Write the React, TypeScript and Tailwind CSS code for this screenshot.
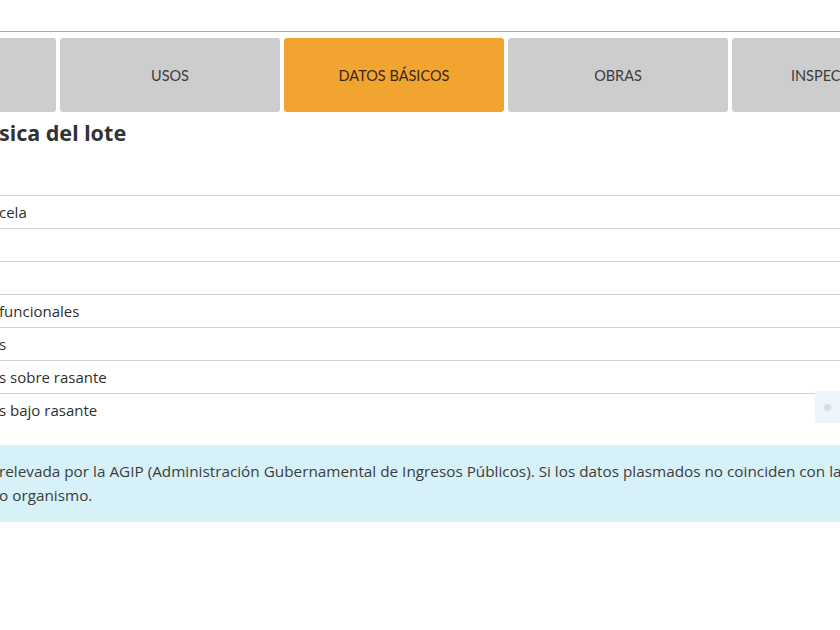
const tabs = [
  { label: "", active: false },
  { label: "USOS", active: false },
  { label: "DATOS BÁSICOS", active: true },
  { label: "OBRAS", active: false },
  { label: "INSPECCIONES", active: false },
];

const rows = [
  "cela",
  "",
  "",
  "funcionales",
  "s",
  "s sobre rasante",
  "s bajo rasante",
];

export default function App() {
  return (
    <div className="w-[840px] h-[630px] overflow-hidden bg-white font-['Open_Sans',sans-serif] text-[#333]">
      <div className="pt-[31px]">
        <div className="border-t-[1.5px] border-[#a8a8a8]" />
        {/* tabs, scrolled so the first one is mostly hidden */}
        <div className="mt-[6px] -ml-[164px] flex gap-[4px]">
          {tabs.map((tab, i) => (
            <div
              key={i}
              className={`shrink-0 w-[220px] h-[74px] rounded-[3px] flex items-center justify-center pt-[2px] text-[14.5px] font-['Lato',sans-serif] ${
                tab.active ? "bg-[#f2a431] text-[#3b2a12]" : "bg-[#cdcdcd] text-[#3c3c3c]"
              }`}
            >
              {tab.label}
            </div>
          ))}
        </div>
        <h2 className="mt-[7px] -ml-[1px] h-[28px] text-[21.5px] leading-[28px] font-bold text-[#333] font-['Noto_Sans',sans-serif]">
          sica del lote
        </h2>
        <div className="mt-[48px] relative">
          {rows.map((r, i) => (
            <div
              key={i}
              className="h-[33px] border-t-[1.5px] border-[#d2d2d2] flex items-center text-[15px] text-[#2f2f2f] -ml-[1px]"
            >
              {r}
            </div>
          ))}
          <div className="absolute right-0 top-[196px] w-[25px] h-[32px] bg-[#eef4fc] flex items-center justify-center">
            <span className="w-[7px] h-[7px] rounded-full bg-[#d9dde3]" />
          </div>
        </div>
        <div className="mt-[19px] h-[77px] bg-[#d6f1f8] pt-[14px] text-[15.3px] leading-[24px] text-[#3d3d3d] whitespace-nowrap -ml-[1px]">
          <p>relevada por la AGIP (Administración Gubernamental de Ingresos Públicos). Si los datos plasmados no coinciden con la realidad</p>
          <p>o organismo.</p>
        </div>
      </div>
    </div>
  );
}
